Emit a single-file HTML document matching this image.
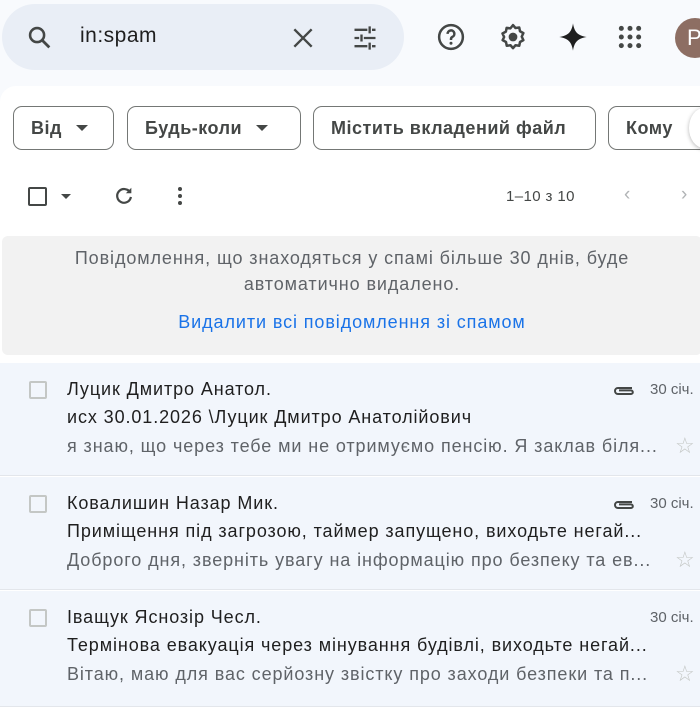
<!DOCTYPE html>
<html><head><meta charset="utf-8"><style>
*{margin:0;padding:0;box-sizing:border-box}
body{width:700px;height:707px;overflow:hidden;background:#f8fafd;font-family:"Liberation Sans",sans-serif;position:relative;color:#1f1f1f}
.a{position:absolute}
.search{left:2px;top:4px;width:402px;height:66px;border-radius:33px;background:#e9eef6}
.card{left:0;top:86px;width:720px;height:640px;background:#fff;border-radius:16px 0 0 0}
.chip{top:106px;height:44px;border:1.5px solid #747775;border-radius:9px;font-size:18px;font-weight:bold;letter-spacing:0.5px;color:#444746;display:flex;align-items:center;padding-left:17px;background:#fff;white-space:nowrap}
.tri{width:0;height:0;border-left:6px solid transparent;border-right:6px solid transparent;border-top:6px solid #444746;margin-left:14px}
.notice{left:2px;top:236px;width:700px;height:119px;background:#f2f2f2;border-radius:6px;text-align:center;font-size:18px;letter-spacing:0.9px;color:#5f6368;line-height:26px;padding-top:9px}
.row{left:0;width:700px;background:#f2f6fc;border-bottom:1px solid #e3e6eb}
.cb{position:absolute;left:29px;width:18px;height:18px;border:2px solid #c4c7c5;border-radius:2px}
.t{position:absolute;left:67px;font-size:18px;letter-spacing:0.9px;white-space:nowrap}
.s{color:#5f6368}
.d{position:absolute;left:650px;font-size:15px;color:#5f6368}
.star{position:absolute;left:675px;font-size:22px;color:#c4c7c5}
</style></head><body>
<div class="a search"></div>
<svg class="a" style="left:26px;top:24px" width="28" height="28" viewBox="0 0 24 24"><circle cx="9.5" cy="9.5" r="6" fill="none" stroke="#444746" stroke-width="2.2"/><path d="M14 14l6 6" stroke="#444746" stroke-width="2.4"/></svg>
<div class="a" style="left:80px;top:24px;font-size:21px;letter-spacing:0.5px;color:#1f1f1f">in:spam</div>
<svg class="a" style="left:290px;top:25px" width="26" height="26" viewBox="0 0 24 24"><path d="M4 4l16 16M20 4L4 20" stroke="#444746" stroke-width="2.2"/></svg>
<svg class="a" style="left:350px;top:24px" width="30" height="28" viewBox="0 0 24 24"><path d="M3 5h11M18 5h3M16 2v6M3 12h4M11 12h10M9 9v6M3 19h11M18 19h3M16 16v6" stroke="#444746" stroke-width="2"/></svg>
<svg class="a" style="left:436px;top:22px" width="30" height="30" viewBox="0 0 24 24"><circle cx="12" cy="12" r="9.5" fill="none" stroke="#444746" stroke-width="2"/><path d="M9.3 9.5a2.7 2.7 0 1 1 3.8 2.4c-.8.4-1.1 1-1.1 1.9v.6" fill="none" stroke="#444746" stroke-width="2"/><circle cx="12" cy="17" r="1.2" fill="#444746"/></svg>
<svg class="a" style="left:498px;top:22px" width="30" height="30" viewBox="0 0 24 24"><path d="M12 2.5l2 2.3 3-.4.6 3 2.7 1.5-1.3 2.8 1.3 2.8-2.7 1.5-.6 3-3-.4-2 2.3-2-2.3-3 .4-.6-3-2.7-1.5L4.9 12 3.6 9.2l2.7-1.5.6-3 3 .4z" fill="none" stroke="#444746" stroke-width="2" stroke-linejoin="round"/><circle cx="12" cy="12" r="3.5" fill="#444746"/></svg>
<svg class="a" style="left:558px;top:22px" width="30" height="30" viewBox="0 0 24 24"><path d="M12 1C13 8 16 11 23 12 16 13 13 16 12 23 11 16 8 13 1 12 8 11 11 8 12 1z" fill="#1f1f1f"/></svg>
<svg class="a" style="left:617px;top:24px" width="26" height="26" viewBox="0 0 24 24" fill="#444746"><circle cx="4" cy="4" r="2.3"/><circle cx="12" cy="4" r="2.3"/><circle cx="20" cy="4" r="2.3"/><circle cx="4" cy="12" r="2.3"/><circle cx="12" cy="12" r="2.3"/><circle cx="20" cy="12" r="2.3"/><circle cx="4" cy="20" r="2.3"/><circle cx="12" cy="20" r="2.3"/><circle cx="20" cy="20" r="2.3"/></svg>
<div class="a" style="left:675px;top:18px;width:40px;height:40px;border-radius:50%;background:#8d6e63;color:#fff;font-size:22px;line-height:40px;padding-left:12px">P</div>
<div class="a card"></div>
<div class="a chip" style="left:13px;width:101px">Від<span class="tri"></span></div>
<div class="a chip" style="left:127px;width:174px">Будь-коли<span class="tri"></span></div>
<div class="a chip" style="left:313px;width:283px">Містить вкладений файл</div>
<div class="a chip" style="left:608px;width:110px">Кому</div>
<div class="a" style="left:689px;top:108px;width:30px;height:40px;border-radius:50%;background:#fff;box-shadow:0 1px 4px rgba(0,0,0,.3)"></div>
<div class="a" style="left:28px;top:187px;width:19px;height:19px;border:2px solid #444746;border-radius:2px"></div>
<div class="a" style="left:61px;top:194px;width:0;height:0;border-left:5px solid transparent;border-right:5px solid transparent;border-top:5px solid #444746"></div>
<svg class="a" style="left:113px;top:185px" width="22" height="22" viewBox="0 0 24 24"><path d="M18.5 8A7.5 7.5 0 1 0 19.5 13" fill="none" stroke="#444746" stroke-width="2.4"/><path d="M20 3v6h-6z" fill="#444746"/></svg>
<svg class="a" style="left:170px;top:185px" width="20" height="22" viewBox="0 0 20 22" fill="#444746"><circle cx="10" cy="4" r="2"/><circle cx="10" cy="11" r="2"/><circle cx="10" cy="18" r="2"/></svg>
<div class="a" style="left:506px;top:188px;font-size:15px;letter-spacing:0.4px;color:#444746">1–10 з 10</div>
<div class="a" style="left:624px;top:184px;font-size:19px;color:#b0b3b5">‹</div>
<div class="a" style="left:681px;top:184px;font-size:19px;color:#b0b3b5">›</div>
<div class="a notice">Повідомлення, що знаходяться у спамі більше 30 днів, буде<br>автоматично видалено.<div style="color:#1a73e8;margin-top:12px">Видалити всі повідомлення зі спамом</div></div>

<div class="a row" style="top:363px;height:113px">
<div class="cb" style="top:18px"></div>
<div class="t" style="top:16px">Луцик Дмитро Анатол.</div>
<svg style="position:absolute;left:612px;top:21px" width="24" height="14" viewBox="0 0 24 14"><path d="M20 4H6a3 3 0 0 0 0 6h13a1.8 1.8 0 0 0 0-3.6H7" fill="none" stroke="#444746" stroke-width="2"/></svg>
<div class="d" style="top:18px">30 січ.</div>
<div class="t" style="top:44px">исх 30.01.2026 \Луцик Дмитро Анатолійович</div>
<div class="t s" style="top:73px">я знаю, що через тебе ми не отримуємо пенсію. Я заклав біля...</div>
<div class="star" style="top:70px">☆</div>
</div>
<div class="a row" style="top:477px;height:113px">
<div class="cb" style="top:18px"></div>
<div class="t" style="top:16px">Ковалишин Назар Мик.</div>
<svg style="position:absolute;left:612px;top:21px" width="24" height="14" viewBox="0 0 24 14"><path d="M20 4H6a3 3 0 0 0 0 6h13a1.8 1.8 0 0 0 0-3.6H7" fill="none" stroke="#444746" stroke-width="2"/></svg>
<div class="d" style="top:18px">30 січ.</div>
<div class="t" style="top:44px">Приміщення під загрозою, таймер запущено, виходьте негай...</div>
<div class="t s" style="top:73px">Доброго дня, зверніть увагу на інформацію про безпеку та ев...</div>
<div class="star" style="top:70px">☆</div>
</div>
<div class="a row" style="top:591px;height:116px">
<div class="cb" style="top:18px"></div>
<div class="t" style="top:16px">Іващук Яснозір Чесл.</div>
<div class="d" style="top:18px">30 січ.</div>
<div class="t" style="top:44px">Термінова евакуація через мінування будівлі, виходьте негай...</div>
<div class="t s" style="top:73px">Вітаю, маю для вас серйозну звістку про заходи безпеки та п...</div>
<div class="star" style="top:70px">☆</div>
</div>
</body></html>
